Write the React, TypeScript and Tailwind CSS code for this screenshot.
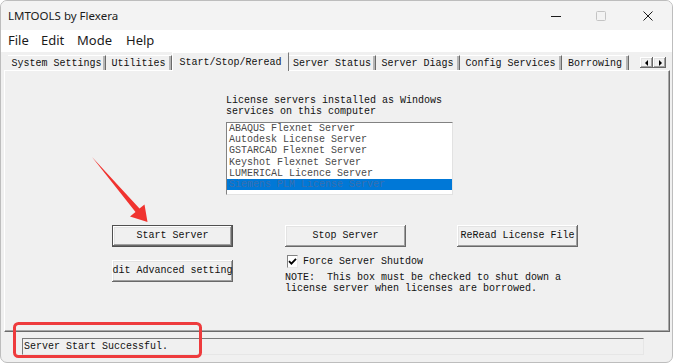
const MONO = "font-['Liberation_Mono','Courier_New',monospace]";

/* tab strip — widths taken straight off the reference */
const TABS = [
  { label: "System Settings", w: "w-[98px]" },
  { label: "Utilities", w: "w-[66px]" },
  { label: "Start/Stop/Reread", w: "w-[117px]", active: true },
  { label: "Server Status", w: "w-[87px]" },
  { label: "Server Diags", w: "w-[84px]" },
  { label: "Config Services", w: "w-[102px]" },
  { label: "Borrowing", w: "w-[67px]" },
];

const SERVICES = [
  "ABAQUS Flexnet Server",
  "Autodesk License Server",
  "GSTARCAD Flexnet Server",
  "Keyshot Flexnet Server",
  "LUMERICAL Licence Server",
  "Siemens PLM License Server",
];

const RAISED =
  "shadow-[inset_-1px_-1px_#696969,inset_1px_1px_#ffffff,inset_-2px_-2px_#a0a0a0,inset_2px_2px_#e3e3e3]";

function WinButton({ label, isDefault = false }: { label: string; isDefault?: boolean }) {
  return (
    <div
      className={`flex h-[22px] w-[121px] items-center justify-center overflow-hidden whitespace-nowrap bg-[#f0f0f0] text-[10px] leading-none text-[#111] ${MONO} ${
        isDefault ? "border border-[#505050]" : ""
      } ${RAISED}`}
    >
      {label}
    </div>
  );
}

function TitleBar() {
  return (
    <div className="flex h-[29px] items-center bg-[#f3f3f3] pl-[7px] pr-[18px]">
      <span className="font-['Noto_Sans',sans-serif] text-[11.5px] text-[#1b1b1b]">LMTOOLS by Flexera</span>
      <div className="ml-auto flex items-center">
        <svg width="12" height="12" viewBox="0 0 12 12" className="mr-[33px]">
          <path d="M1 6.5h10" stroke="#1b1b1b" strokeWidth="1" />
        </svg>
        <svg width="12" height="12" viewBox="0 0 12 12" className="mr-[35px]">
          <rect x="1.5" y="1.5" width="9" height="9" rx="1" fill="none" stroke="#c4c4c4" strokeWidth="1" />
        </svg>
        <svg width="12" height="12" viewBox="0 0 12 12">
          <path d="M1.5 1.5l9 9M10.5 1.5l-9 9" stroke="#1b1b1b" strokeWidth="1" />
        </svg>
      </div>
    </div>
  );
}

function MenuBar() {
  return (
    <div className="flex h-[22px] items-center bg-white pl-[7px] font-['Noto_Sans',sans-serif] text-[13px] text-[#1b1b1b]">
      <span className="w-[33px]">File</span>
      <span className="w-[36px]">Edit</span>
      <span className="w-[49px]">Mode</span>
      <span>Help</span>
    </div>
  );
}

function TabStrip() {
  return (
    <div className={`relative z-10 flex h-[18px] items-end pl-[7px] text-[10px] text-[#111] ${MONO}`}>
      {TABS.map((t) =>
        t.active ? (
          <div
            key={t.label}
            className={`${t.w} -mb-[1px] flex h-[19px] items-start justify-center border-l border-t border-r border-l-white border-t-white border-r-[#7a7a7a] bg-[#f0f0f0] pt-[2px]`}
          >
            {t.label}
          </div>
        ) : (
          <div
            key={t.label}
            className={`${t.w} flex h-[15px] items-center justify-center border-t border-r border-t-white border-r-[#6a6a6a] shadow-[inset_-2px_0_#b5b5b5]`}
          >
            {t.label}
          </div>
        )
      )}
      <div className="mb-[2px] ml-[11px] flex">
        <div className={`flex h-[11px] w-[13px] items-center justify-center bg-[#f0f0f0] ${RAISED}`}>
          <svg width="4" height="6" viewBox="0 0 4 6">
            <path d="M3 0v6L0 3z" fill="#000" />
          </svg>
        </div>
        <div className={`flex h-[11px] w-[13px] items-center justify-center bg-[#f0f0f0] ${RAISED}`}>
          <svg width="4" height="6" viewBox="0 0 4 6">
            <path d="M1 0v6l3-3z" fill="#000" />
          </svg>
        </div>
      </div>
    </div>
  );
}

function ServicesPanel() {
  return (
    <div
      className={`ml-[3px] flex h-[262px] w-[666px] flex-col border border-l-white border-t-white border-r-[#6a6a6a] border-b-[#6a6a6a] shadow-[inset_-1px_-1px_#a8a8a8] ${MONO} text-[10px] text-[#111]`}
    >
      <div className="ml-[221px] mt-[24px] whitespace-pre leading-[11px]">
        {"License servers installed as Windows\nservices on this computer"}
      </div>
      <div className="ml-[221px] mt-[5px] h-[73px] w-[227px] border border-l-[#828282] border-t-[#828282] border-r-[#e2e2e2] border-b-[#e2e2e2] bg-white">
        {SERVICES.map((s, i) =>
          i === SERVICES.length - 1 ? (
            <div key={s} className="h-[11.2px] bg-[#0078d7] pl-[2px] leading-[11.2px] text-[#3b6fae]">
              {s}
            </div>
          ) : (
            <div key={s} className="h-[11.2px] pl-[2px] leading-[11.2px] text-[#4a4a4a]">
              {s}
            </div>
          )
        )}
      </div>

      <div className="ml-[107px] mt-[30px] flex items-start">
        <div className="flex flex-col gap-[13px]">
          <WinButton label="Start Server" isDefault />
          <WinButton label="dit Advanced setting" />
        </div>

        <div className="ml-[52px] flex w-[121px] flex-col">
          <WinButton label="Stop Server" />
          <div className="ml-[2px] mt-[8px] flex items-center whitespace-nowrap">
            <div className="flex h-[13px] w-[13px] items-center justify-center border border-l-[#828282] border-t-[#828282] border-r-[#e8e8e8] border-b-[#e8e8e8] bg-white">
              <svg width="9" height="9" viewBox="0 0 9 9">
                <path d="M1 4.2l2.4 2.4L8 1.8" fill="none" stroke="#000" strokeWidth="1.8" />
              </svg>
            </div>
            <span className="ml-[5px] leading-none">Force Server Shutdow</span>
          </div>
          <div className="mt-[4px] whitespace-pre leading-[11px]">
            {"NOTE:  This box must be checked to shut down a\nlicense server when licenses are borrowed."}
          </div>
        </div>

        <div className="ml-[51px]">
          <WinButton label="ReRead License File" />
        </div>
      </div>
    </div>
  );
}

function StatusBar() {
  return (
    <div className="ml-[21px] mt-[6px] flex h-[17px] w-[622px] items-center border border-l-[#7a7a7a] border-t-[#7a7a7a] border-r-[#e6e6e6] border-b-[#e6e6e6] pl-[1px]">
      <span className={`${MONO} text-[10px] leading-none text-[#111]`}>Server Start Successful.</span>
    </div>
  );
}

export default function App() {
  return (
    <div className="relative h-[363px] w-[673px] bg-white">
      <div className="flex h-[363px] w-[673px] flex-col overflow-hidden rounded-[7px] border border-[#bdbdbd] bg-[#f0f0f0]">
        <TitleBar />
        <MenuBar />
        <TabStrip />
        <ServicesPanel />
        <StatusBar />
      </div>

      {/* annotation overlay: red arrow + highlight box */}
      <svg className="pointer-events-none absolute inset-0" width="673" height="363" viewBox="0 0 673 363">
        <polygon points="92,157 139.5,208.5 144.5,204.5 147.5,222 130,216.5 135.5,212" fill="#f0332f" />
        <rect x="14.5" y="323.5" width="186" height="33" rx="4" fill="none" stroke="#ee3b3d" strokeWidth="3" />
      </svg>
    </div>
  );
}
